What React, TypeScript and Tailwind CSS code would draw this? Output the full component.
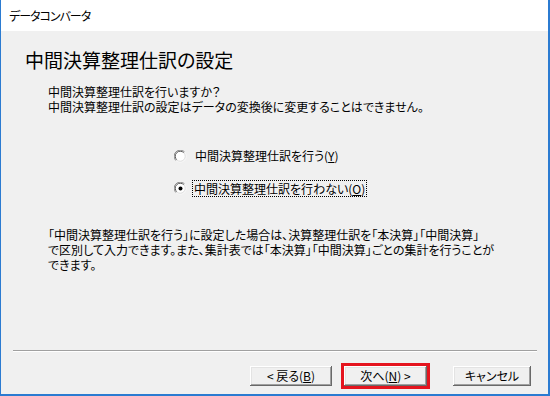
import React from "react";

const font = "[font-family:'Noto_Sans_CJK_JP',sans-serif] [font-feature-settings:'palt']";

function Radio({ checked }: { checked: boolean }) {
  return (
    <svg width="13" height="13" viewBox="0 0 13 13" className="shrink-0">
      <circle cx="6.5" cy="6.5" r="6" fill="#ffffff" />
      <path d="M1.9 10.6 A5.8 5.8 0 0 1 10.6 1.9" fill="none" stroke="#8a8a8a" strokeWidth="1" />
      <path d="M2.7 9.8 A4.7 4.7 0 0 1 9.8 2.7" fill="none" stroke="#5a5a5a" strokeWidth="1" />
      <path d="M10.6 1.9 A5.8 5.8 0 0 1 1.9 10.6" fill="none" stroke="#f4f4f4" strokeWidth="1" />
      <path d="M9.8 2.7 A4.7 4.7 0 0 1 2.7 9.8" fill="none" stroke="#dcdcdc" strokeWidth="1" />
      {checked && <circle cx="6.5" cy="6.5" r="2" fill="#000" />}
    </svg>
  );
}

function Btn({ children, w }: { children: React.ReactNode; w: string }) {
  return (
    <div
      className={`${w} h-[20px] flex items-center justify-center bg-[#f0f0f0] text-[12px] leading-none text-black shadow-[inset_-1px_-1px_#696969,inset_1px_1px_#ffffff,inset_-2px_-2px_#a0a0a0,inset_2px_2px_#e3e3e3]`}
    >
      {children}
    </div>
  );
}

export default function App() {
  return (
    <div
      className={`w-[550px] h-[396px] flex flex-col bg-[#f0f0f0] border-l border-r-2 border-b-2 border-[#2b7bd1] text-black ${font}`}
    >
      <div className="h-[31px] shrink-0 bg-white flex items-center pl-[8px] text-[12px] tracking-[-1px]">
        データコンバータ
      </div>
      <div className="flex-1 flex flex-col">
        <div className="mt-[17px] ml-[24px] text-[19px] leading-[24px]">中間決算整理仕訳の設定</div>
        <div className="mt-[12px] ml-[47px] text-[12px] leading-[15px]">
          <div>中間決算整理仕訳を行いますか？</div>
          <div>中間決算整理仕訳の設定はデータの変換後に変更することはできません。</div>
        </div>
        <div className="mt-[34px] ml-[173px] flex flex-col gap-[16px] text-[12px]">
          <div className="h-[16px] flex items-center gap-[7px]">
            <Radio checked={false} />
            <span className="px-[1px]">
              中間決算整理仕訳を行う(<span className="underline">Y</span>)
            </span>
          </div>
          <div className="h-[16px] flex items-center gap-[6px]">
            <Radio checked={true} />
            <span className="px-[1px] outline outline-1 outline-dotted outline-black leading-[15px]">
              中間決算整理仕訳を行わない(<span className="underline">O</span>)
            </span>
          </div>
        </div>
        <div className="mt-[31px] ml-[47px] text-[12px] leading-[15px]">
          <div>「中間決算整理仕訳を行う」に設定した場合は、決算整理仕訳を「本決算」「中間決算」</div>
          <div>で区別して入力できます。また、集計表では「本決算」「中間決算」ごとの集計を行うことが</div>
          <div>できます。</div>
        </div>
        <div className="flex-1" />
        <div className="ml-[12px] mr-[11px] border-t border-[#a0a0a0] border-b border-b-white" />
        <div className="mt-[14px] mb-[8px] flex items-center justify-end pr-[17px]">
          <Btn w="w-[82px]">
            &lt; 戻る(<span className="underline">B</span>)
          </Btn>
          <div className="relative ml-[12px]">
            <Btn w="w-[83px]">
              次へ(<span className="underline">N</span>) &gt;
            </Btn>
            <div className="absolute -left-[3px] -right-[3px] -top-[3px] -bottom-[3px] border-[3px] border-[#e5141e]" />
          </div>
          <div className="ml-[26px]">
            <Btn w="w-[78px]">キャンセル</Btn>
          </div>
        </div>
      </div>
    </div>
  );
}
